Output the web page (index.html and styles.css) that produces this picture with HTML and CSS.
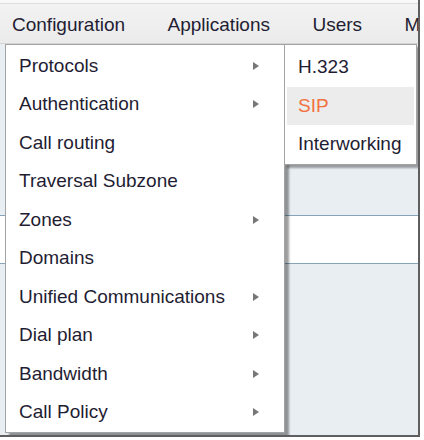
FILE: index.html
```html
<!DOCTYPE html>
<html>
<head>
<meta charset="utf-8">
<link rel="stylesheet" href="styles.css">
</head>
<body>
<div class="frame">
  <nav class="topbar">
    <span class="top-item">Configuration</span>
    <span class="top-item">Applications</span>
    <span class="top-item">Users</span>
    <span class="top-item">M</span>
  </nav>
  <div class="page">
    <div class="row row-a"></div>
    <div class="row row-b"></div>
    <div class="row row-c"></div>

    <ul class="menu">
      <li class="item"><span>Protocols</span><i class="arrow"></i></li>
      <li class="item"><span>Authentication</span><i class="arrow"></i></li>
      <li class="item"><span>Call routing</span></li>
      <li class="item"><span>Traversal Subzone</span></li>
      <li class="item"><span>Zones</span><i class="arrow"></i></li>
      <li class="item"><span>Domains</span></li>
      <li class="item"><span>Unified Communications</span><i class="arrow"></i></li>
      <li class="item"><span>Dial plan</span><i class="arrow"></i></li>
      <li class="item"><span>Bandwidth</span><i class="arrow"></i></li>
      <li class="item"><span>Call Policy</span><i class="arrow"></i></li>
    </ul>

    <ul class="submenu">
      <li class="sub-item">H.323</li>
      <li class="sub-item active">SIP</li>
      <li class="sub-item">Interworking</li>
    </ul>
  </div>
</div>
</body>
</html>
```

FILE: styles.css
```css
* { box-sizing: border-box; }

html, body {
  margin: 0;
  padding: 0;
  background: #ffffff;
}

body {
  font-family: "Liberation Sans", Arial, sans-serif;
  font-size: 19px;
  color: #1f1d33;
  width: 424px;
  height: 440px;
  overflow: hidden;
}

.frame {
  position: relative;
  width: 420px;
  height: 437px;
  border-right: 2px solid #5f5f5f;
  border-bottom: 2px solid #5f5f5f;
  display: flex;
  flex-direction: column;
  overflow: hidden;
}

.topbar {
  height: 44px;
  flex: none;
  display: flex;
  gap: 42.5px;
  padding: 6px 0 0 12px;
  white-space: nowrap;
  background: linear-gradient(#f8f8f8 0, #f8f8f8 3px, #dedede 3px, #dedede 4px, #f2f2f2 4px, #ebebeb 100%);
  border-bottom: 1px solid #d4d4d4;
}

.top-item {
  line-height: 38px;
}

.page {
  flex: 1;
  display: flex;
  flex-direction: column;
}

.row {
  background: #e9eef3;
  border-bottom: 1px solid #86a3b8;
}

.row-a { height: 172px; }
.row-b { height: 48px; background: #ffffff; }
.row-c { flex: 1; border-bottom: none; }

.menu {
  position: absolute;
  left: 5px;
  top: 44px;
  width: 280px;
  margin: 0;
  padding: 1.5px 0 0 0;
  list-style: none;
  background: #ffffff;
  border: 1px solid #a3a3a3;
  box-shadow: 4px 4px 2px rgba(0, 0, 0, 0.38);
}

.item {
  height: 38.5px;
  display: flex;
  align-items: center;
  padding: 0 25px 0 13px;
  white-space: nowrap;
}

.arrow {
  margin-left: auto;
  width: 0;
  height: 0;
  border-left: 6px solid #777777;
  border-top: 4px solid transparent;
  border-bottom: 4px solid transparent;
}

.submenu {
  position: absolute;
  left: 284px;
  top: 44px;
  width: 133px;
  margin: 0;
  padding: 3px 2px 0 2px;
  list-style: none;
  background: #ffffff;
  border: 1px solid #a3a3a3;
  box-shadow: 3px 3px 2px rgba(0, 0, 0, 0.35);
}

.sub-item {
  height: 38.5px;
  display: flex;
  align-items: center;
  padding-left: 11px;
  white-space: nowrap;
}

.sub-item.active {
  background: #ececec;
  color: #f2713f;
}
```
